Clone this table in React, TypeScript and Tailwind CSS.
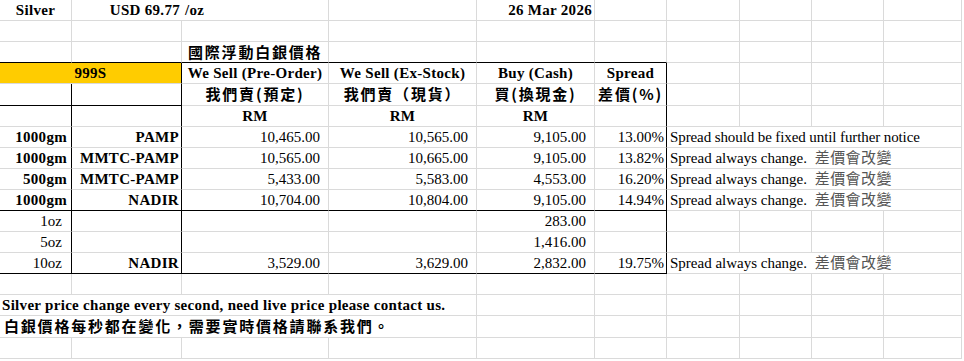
import type { ReactNode } from "react";

type Cell = {
  t?: ReactNode;
  al?: "l" | "c" | "r";
  bold?: boolean;
  r?: "g" | "k" | "n";
  b?: "g" | "k";
  w?: string;
  x?: string;
};

const W = [
  "w-[72px]",
  "w-[110px]",
  "w-[147px]",
  "w-[148px]",
  "w-[118px]",
  "w-[72px]",
  "w-[73px]",
  "w-[72px]",
  "w-[72px]",
  "w-[78px]",
];

const cjk = "font-['Noto_Sans_CJK_TC',sans-serif] tracking-[1.8px] text-[15px]";

function Zh({ children }: { children: ReactNode }) {
  return <span className={cjk}>{children}</span>;
}

function Note({ first }: { first?: boolean }) {
  if (first) return <span className="tracking-[-0.1px]">Spread should be fixed until further notice</span>;
  return (
    <span>
      Spread always change.{" "}
      <span className="pl-[4px] font-['Noto_Sans_CJK_TC',sans-serif] font-normal text-[15px] tracking-[0.4px] text-[#555]">
        差價會改變
      </span>
    </span>
  );
}

function Row({ cells, tall }: { cells: Cell[]; tall?: boolean }) {
  return (
    <div className={tall ? "flex h-[22px]" : "flex h-[21px]"}>
      {cells.map((c, i) => {
        const al = c.al === "r" ? "justify-end" : c.al === "c" ? "justify-center" : "justify-start";
        const r =
          c.r === "k" ? "border-r border-r-black" : c.r === "n" ? "" : "border-r border-r-[#dadada]";
        const b = c.b === "k" ? "border-b border-b-black" : "border-b border-b-[#dadada]";
        return (
          <div
            key={i}
            className={`flex shrink-0 items-center whitespace-nowrap overflow-visible ${c.w ?? W[i]} ${al} ${r} ${b} ${
              c.bold ? "font-bold tracking-[0.3px]" : ""
            } ${c.x ?? ""}`}
          >
            {c.t}
          </div>
        );
      })}
    </div>
  );
}

const blank = (n: number, extra: Partial<Cell> = {}): Cell[] => Array.from({ length: n }, () => ({ ...extra }));

const data = [
  { g: "1000gm", brand: "PAMP", pre: "10,465.00", ex: "10,565.00", buy: "9,105.00", sp: "13.00%", first: true },
  { g: "1000gm", brand: "MMTC-PAMP", pre: "10,565.00", ex: "10,665.00", buy: "9,105.00", sp: "13.82%" },
  { g: "500gm", brand: "MMTC-PAMP", pre: "5,433.00", ex: "5,583.00", buy: "4,553.00", sp: "16.20%" },
  { g: "1000gm", brand: "NADIR", pre: "10,704.00", ex: "10,804.00", buy: "9,105.00", sp: "14.94%" },
];

const coins = [
  { g: "1oz", brand: "", pre: "", ex: "", buy: "283.00", sp: "" },
  { g: "5oz", brand: "", pre: "", ex: "", buy: "1,416.00", sp: "" },
  { g: "10oz", brand: "NADIR", pre: "3,529.00", ex: "3,629.00", buy: "2,832.00", sp: "19.75%" },
];

export default function App() {
  return (
    <div className="w-[964px] h-[361px] overflow-hidden bg-white text-black font-['Liberation_Serif','Noto_Sans_CJK_TC',serif] text-[15px]">
      <Row
        cells={[
          { t: "Silver", al: "c", bold: true },
          { t: "USD 69.77", al: "r", bold: true, r: "n", x: "pr-[2px]" },
          { t: "/oz", bold: true, x: "pl-[3px]" },
          {},
          { t: "26 Mar 2026", al: "r", bold: true, x: "pr-[2px]" },
          ...blank(5),
        ]}
      />
      <Row cells={blank(10)} />
      <Row
        cells={[
          { b: "k" },
          { b: "k" },
          { t: <Zh>國際浮動白銀價格</Zh>, bold: true, b: "k", x: "pl-[6px]" },
          { b: "k" },
          { b: "k" },
          { b: "k" },
          ...blank(4),
        ]}
      />
      <Row
        cells={[
          { t: "999S", al: "c", bold: true, r: "k", w: "w-[182px]", x: "bg-[#ffcc00]" },
          { t: "We Sell (Pre-Order)", al: "c", bold: true, w: "w-[147px]" },
          { t: "We Sell (Ex-Stock)", al: "c", bold: true, w: "w-[148px]" },
          { t: "Buy (Cash)", al: "c", bold: true, w: "w-[118px]" },
          { t: "Spread", al: "c", bold: true, r: "k", w: "w-[72px]" },
          { w: "w-[73px]" },
          { w: "w-[72px]" },
          { w: "w-[72px]" },
          { w: "w-[78px]" },
        ]}
      />
      <Row
        tall
        cells={[
          { r: "k", b: "k" },
          { r: "k", b: "k" },
          { t: <Zh>我們賣(預定)</Zh>, al: "c", bold: true },
          { t: <Zh>我們賣（現貨）</Zh>, al: "c", bold: true },
          { t: <Zh>買(換現金)</Zh>, al: "c", bold: true },
          { t: <Zh>差價(%)</Zh>, al: "c", bold: true, r: "k" },
          ...blank(4),
        ]}
      />
      <Row
        cells={[
          { r: "k" },
          { r: "k" },
          { t: "RM", al: "c", bold: true },
          { t: "RM", al: "c", bold: true },
          { t: "RM", al: "c", bold: true },
          { r: "k" },
          ...blank(4),
        ]}
      />
      {data.map((d, i) => {
        const b = i === data.length - 1 ? "k" : "g";
        return (
          <Row
            key={i}
            cells={[
              { t: d.g, al: "r", bold: true, r: "k", b, x: "pr-[4px]" },
              { t: d.brand, al: "r", bold: true, r: "k", b, x: "pr-[2px]" },
              { t: d.pre, al: "r", b, x: "pr-[8px]" },
              { t: d.ex, al: "r", b, x: "pr-[8px]" },
              { t: d.buy, al: "r", b, x: "pr-[8px]" },
              { t: d.sp, al: "r", r: "k", b, x: "pr-[2px]" },
              { t: <Note first={d.first} />, r: "n", x: "pl-[3px]" },
              { r: "n" },
              { r: "n" },
              {},
            ]}
          />
        );
      })}
      {coins.map((d, i) => {
        const b = i === coins.length - 1 ? "k" : "g";
        const note = d.sp !== "";
        return (
          <Row
            key={i}
            cells={[
              { t: d.g, al: "r", r: "k", b, x: "pr-[9px]" },
              { t: d.brand, al: "r", bold: true, r: "k", b, x: "pr-[2px]" },
              { t: d.pre, al: "r", b, x: "pr-[8px]" },
              { t: d.ex, al: "r", b, x: "pr-[8px]" },
              { t: d.buy, al: "r", b, x: "pr-[8px]" },
              { t: d.sp, al: "r", r: "k", b, x: "pr-[2px]" },
              note ? { t: <Note />, r: "n", x: "pl-[3px]" } : {},
              note ? { r: "n" } : {},
              note ? { r: "n" } : {},
              {},
            ]}
          />
        );
      })}
      <Row cells={blank(10)} />
      <Row
        cells={[
          { t: "Silver price change every second, need live price please contact us.", bold: true, r: "n", x: "pl-[2px]" },
          { r: "n" },
          { r: "n" },
          ...blank(7),
        ]}
      />
      <Row
        tall
        cells={[
          { t: <Zh>白銀價格每秒都在變化，需要實時價格請聯系我們。</Zh>, bold: true, r: "n", x: "pl-[4px]" },
          { r: "n" },
          { r: "n" },
          ...blank(7),
        ]}
      />
      <Row cells={blank(10)} />
    </div>
  );
}
